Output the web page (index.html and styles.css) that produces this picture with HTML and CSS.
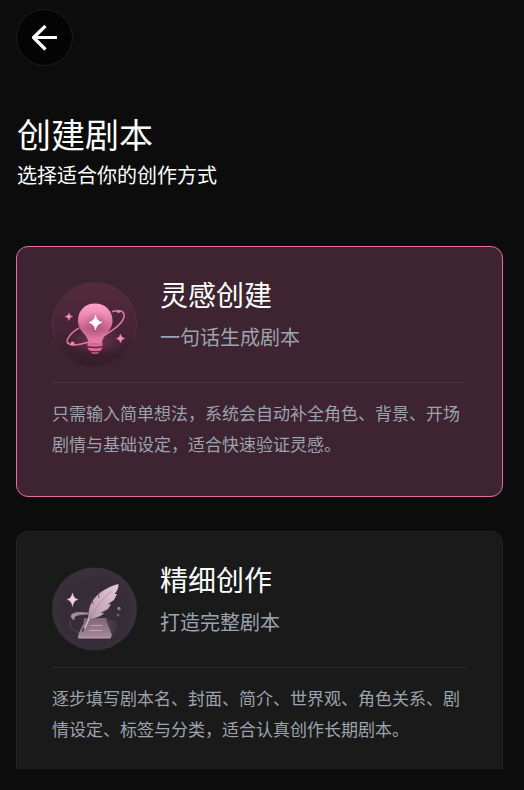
FILE: index.html
```html
<!DOCTYPE html>
<html lang="zh-CN">
<head>
<meta charset="utf-8">
<meta name="viewport" content="width=device-width, initial-scale=1">
<title>创建剧本</title>
<link rel="stylesheet" href="styles.css">
</head>
<body>
<header class="topbar">
  <button class="back" type="button" aria-label="返回">
    <svg viewBox="0 0 30 30" width="30" height="30" fill="none" stroke="#fff" stroke-width="3.2" stroke-linejoin="round" aria-hidden="true"><path d="M27 14.500H4M15.500 3L3.500 14.500L15.500 26.500"/></svg>
  </button>
</header>
<main class="page">
  <div class="heading">
    <h1 class="heading-title">创建剧本</h1>
    <p class="heading-sub">选择适合你的创作方式</p>
  </div>
  <div class="list">
    <a class="card card-active" href="#quick">
      <div class="card-head">
        <svg class="art" viewBox="0 0 85 85" aria-hidden="true">
          <defs>
            <linearGradient id="disc1" x1="0" y1="0" x2="0" y2="1"><stop offset="0" stop-color="#532b3d"/><stop offset=".5" stop-color="#482536"/><stop offset="1" stop-color="#341d29"/></linearGradient>
            <linearGradient id="edge1" x1="0" y1="0" x2="0" y2="1"><stop offset="0" stop-color="#552c3e"/><stop offset=".5" stop-color="#5a2f42"/><stop offset="1" stop-color="#371f2b"/></linearGradient>
            <linearGradient id="bulb" x1="0" y1="0" x2="0" y2="1"><stop offset="0" stop-color="#ffa3c8"/><stop offset=".35" stop-color="#e884ad"/><stop offset=".65" stop-color="#c4638b"/><stop offset="1" stop-color="#e880a9"/></linearGradient>
            <radialGradient id="core"><stop offset="0" stop-color="#96486b" stop-opacity=".6"/><stop offset="1" stop-color="#96486b" stop-opacity="0"/></radialGradient>
            <radialGradient id="glow"><stop offset="0" stop-color="#9d4b6d" stop-opacity=".45"/><stop offset="1" stop-color="#9d4b6d" stop-opacity="0"/></radialGradient>
          </defs>
          <circle cx="42.500" cy="42.500" r="42" fill="url(#disc1)" stroke="url(#edge1)"/>
          <ellipse cx="44" cy="59" rx="30" ry="14" fill="url(#glow)"/>
          <path d="M27 46C18 51 13 59 16 61.500" fill="none" stroke="#dc739c" stroke-width="1.500"/>
          <path d="M43 21.500C32.500 21.500 26 29 26 38.500C26 46 30 49.500 33.500 53.500C36 56.500 36 60 37 61H49.500C50.500 59 51 56 53.500 53C57 49 60.500 45.500 60.500 38.500C60.500 29 53.500 21.500 43 21.500Z" fill="url(#bulb)"/>
          <circle cx="43" cy="43" r="13" fill="url(#core)"/>
          <path d="M35.500 60.500Q43 62 50.500 60.500V64Q43 65.500 35.500 64ZM35.500 65.500Q43 67 50.500 65.500L49 68.500Q43 70 37 68.500Z" fill="#d96c97"/>
          <path d="M38.500 69.500Q43 71 47.500 69.500L45.500 72H40.500Z" fill="#b85780"/>
          <path d="M60.500 29.500C68 27.500 73 29 72 35C70 44 51 56 35 60.500C25 63.500 17 64 16 60.500" fill="none" stroke="#e3799f" stroke-width="1.500" stroke-linecap="round"/>
          <circle cx="20.500" cy="61.500" r="2" fill="#ed83ac"/><circle cx="66.500" cy="29.500" r="1.600" fill="#ed83ac"/>
          <path d="M43.500 33Q44.500 39 50 40.500Q44.500 42 43.500 48Q42.500 42 37 40.500Q42.500 39 43.500 33Z" fill="#fff" stroke="#fff" stroke-width=".6"/>
          <path d="M17 31Q17.500 34 20.500 34.500Q17.500 35 17 38.500Q16.500 35 13 34.500Q16.500 34 17 31ZM68.500 52Q69 55.500 72.500 56.500Q69 57.500 68.500 61Q68 57.500 64.500 56.500Q68 55.500 68.500 52Z" fill="#f58fb6" stroke="#e47fa6" stroke-width=".5"/>
        </svg>
        <div class="card-text">
          <h2 class="card-title">灵感创建</h2>
          <p class="card-sub">一句话生成剧本</p>
        </div>
      </div>
      <p class="card-desc">只需输入简单想法，系统会自动补全角色、背景、开场剧情与基础设定，适合快速验证灵感。</p>
    </a>
    <a class="card" href="#detailed">
      <div class="card-head">
        <svg class="art" viewBox="0 0 85 85" aria-hidden="true">
          <defs>
            <radialGradient id="disc2" cx=".5" cy=".55" r=".55"><stop offset="0" stop-color="#3c303c"/><stop offset=".6" stop-color="#352c38"/><stop offset="1" stop-color="#3c303d"/></radialGradient>
            <linearGradient id="feather" x1="1" y1="0" x2="0" y2="1"><stop offset="0" stop-color="#e5cbdc"/><stop offset=".55" stop-color="#c5a7b9"/><stop offset="1" stop-color="#a1849a"/></linearGradient>
            <linearGradient id="paper" x1="0" y1="0" x2="0" y2="1"><stop offset="0" stop-color="#7f6376"/><stop offset="1" stop-color="#a98b9e"/></linearGradient>
            <linearGradient id="shade"><stop offset="0" stop-color="#8b6d81" stop-opacity=".75"/><stop offset="1" stop-color="#8b6d81" stop-opacity="0"/></linearGradient>
          </defs>
          <ellipse cx="42.500" cy="42" rx="42.500" ry="41.500" fill="url(#disc2)"/>
          <path d="M55 53L67 54Q66 65 58 71H40Z" fill="url(#shade)"/>
          <path d="M36 46Q20 44 19 49Q19 51 22 53Q20 47 36 47Z" fill="#aa8b9f" stroke="#aa8b9f" stroke-width=".8"/>
          <path d="M18 54Q17 62 27 66" fill="none" stroke="#5b4858"/>
          <path d="M32 51H55Q53.500 54 56 58L59.500 67Q60 71 57 71.500H26Q25.500 69 27 66L31.500 56Q32 53 32 51Z" fill="url(#paper)"/>
          <path d="M27 70.500H59" stroke="#b696a9" stroke-width="1.300"/>
          <path d="M39 58.500H50M37 63.500H50" stroke="#c3a3b7" stroke-width="1.200"/>
          <path d="M66.500 17C55 19.500 42 28 38 39C36 44 37 48 35.500 53L31 64L38 52C44 51 50 49 52 46L48.500 46L56 42L59 37L55.500 37.500L62 33L65 27L62.500 27Q66.500 23 66.500 17Z" fill="url(#feather)"/>
          <path d="M60 24C51 31 42 43 37 53" fill="none" stroke="#9b7f92" stroke-width=".6"/>
          <path d="M37 52L31 65" stroke="#dabfd0" stroke-width="1.300"/><path d="M32 61L30.500 65" stroke="#4b3946" stroke-width="1.800"/>
          <path d="M47 25L46.500 31M40 33L41 37" stroke="#5d4a59" stroke-width=".8"/>
          <path d="M20.500 26Q21.500 31.500 26 32.500Q21.500 33.500 20.500 39.500Q19.500 33.500 15 32.500Q19.500 31.500 20.500 26Z" fill="#f0d3e4" stroke="#d9bbcc" stroke-width=".5"/>
          <circle cx="67" cy="41.500" r="1.700" fill="#987b8e"/><circle cx="66" cy="48" r="1.400" fill="#725d6d"/>
        </svg>
        <div class="card-text">
          <h2 class="card-title">精细创作</h2>
          <p class="card-sub">打造完整剧本</p>
        </div>
      </div>
      <p class="card-desc">逐步填写剧本名、封面、简介、世界观、角色关系、剧情设定、标签与分类，适合认真创作长期剧本。</p>
    </a>
  </div>
</main>
</body>
</html>
```

FILE: styles.css
```css
* {
  box-sizing: border-box;
}

body {
  display: flex;
  flex-direction: column;
  height: 100vh;
  margin: 0;
  padding: 9px 21px 21px 16px;
  background: #0c0c0c;
  color: #fff;
  font-family: "Noto Sans CJK SC", sans-serif;
}

h1,
h2,
p {
  margin: 0;
  font-weight: 400;
}

.topbar {
  display: flex;
}

.back {
  display: flex;
  align-items: center;
  justify-content: center;
  width: 57px;
  height: 57px;
  padding: 0;
  border: 1px solid #1e1e1e;
  border-radius: 50%;
  background: #040404;
  cursor: pointer;
}

.page {
  display: flex;
  flex: 1;
  flex-direction: column;
  min-height: 0;
}

.heading {
  padding: 46px 1px 55px;
}

.heading-title {
  font-size: 34px;
  line-height: 44px;
}

.heading-sub {
  margin-top: 3px;
  font-size: 20px;
  line-height: 32px;
}

.list {
  display: flex;
  flex: 1;
  flex-direction: column;
  gap: 34px;
  min-height: 0;
  overflow-y: auto;
  scrollbar-width: none;
}

.card {
  flex-shrink: 0;
  padding: 35px 35px 37px;
  border: 1px solid #242424;
  border-radius: 12px;
  background: #1a1a1a;
  color: inherit;
  text-decoration: none;
}

.card-active {
  border-color: #e86ba6;
  background: #3d2430;
}

.card-head {
  display: flex;
  gap: 23px;
  padding-bottom: 15px;
  border-bottom: 1px solid rgba(255, 255, 255, 0.07);
}

.art {
  flex: none;
  width: 85px;
  height: 85px;
}

.card-title {
  font-size: 28px;
  line-height: 24px;
}

.card-sub {
  margin-top: 15px;
  color: #9ca3af;
  font-size: 20px;
  line-height: 32px;
}

.card-desc {
  padding-top: 14px;
  color: #9ca3af;
  font-size: 17px;
  line-height: 31px;
}
```
